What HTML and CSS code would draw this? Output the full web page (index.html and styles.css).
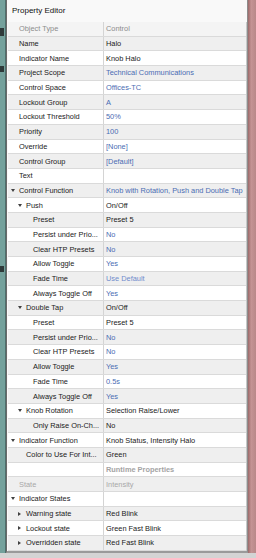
FILE: index.html
```html
<!DOCTYPE html>
<html lang="en">
<head>
    <meta charset="UTF-8">
    <title>Property Editor</title>
    <link rel="stylesheet" href="styles.css">
</head>
<body>
<div class="screen">
    <div class="backdrop-left">
        <div class="blot b1"></div>
        <div class="blot b2"></div>
        <div class="blot b3"></div>
    </div>
    <div class="dialog">
        <div class="dialog-title">Property Editor</div>
        <div class="grid">
            <div class="row head"><div class="key">Object Type</div><div class="val">Control</div></div>
            <div class="row alt"><div class="key">Name</div><div class="val">Halo</div></div>
            <div class="row"><div class="key">Indicator Name</div><div class="val">Knob Halo</div></div>
            <div class="row alt"><div class="key">Project Scope</div><div class="val set">Technical Communications</div></div>
            <div class="row"><div class="key">Control Space</div><div class="val set">Offices-TC</div></div>
            <div class="row alt"><div class="key">Lockout Group</div><div class="val set">A</div></div>
            <div class="row"><div class="key">Lockout Threshold</div><div class="val set">50%</div></div>
            <div class="row alt"><div class="key">Priority</div><div class="val set">100</div></div>
            <div class="row"><div class="key">Override</div><div class="val set">[None]</div></div>
            <div class="row alt"><div class="key">Control Group</div><div class="val set">[Default]</div></div>
            <div class="row"><div class="key">Text</div><div class="val"></div></div>
            <div class="row alt"><div class="key"><span class="caret open"></span>Control Function</div><div class="val set">Knob with Rotation, Push and Double Tap</div></div>
            <div class="row"><div class="key lvl1"><span class="caret open"></span>Push</div><div class="val">On/Off</div></div>
            <div class="row alt"><div class="key lvl2">Preset</div><div class="val">Preset 5</div></div>
            <div class="row"><div class="key lvl2">Persist under Prio...</div><div class="val set">No</div></div>
            <div class="row alt"><div class="key lvl2">Clear HTP Presets</div><div class="val set">No</div></div>
            <div class="row"><div class="key lvl2">Allow Toggle</div><div class="val set">Yes</div></div>
            <div class="row alt"><div class="key lvl2">Fade Time</div><div class="val set light">Use Default</div></div>
            <div class="row"><div class="key lvl2">Always Toggle Off</div><div class="val set">Yes</div></div>
            <div class="row alt"><div class="key lvl1"><span class="caret open"></span>Double Tap</div><div class="val">On/Off</div></div>
            <div class="row"><div class="key lvl2">Preset</div><div class="val">Preset 5</div></div>
            <div class="row alt"><div class="key lvl2">Persist under Prio...</div><div class="val set">No</div></div>
            <div class="row"><div class="key lvl2">Clear HTP Presets</div><div class="val set">No</div></div>
            <div class="row alt"><div class="key lvl2">Allow Toggle</div><div class="val set">Yes</div></div>
            <div class="row"><div class="key lvl2">Fade Time</div><div class="val set">0.5s</div></div>
            <div class="row alt"><div class="key lvl2">Always Toggle Off</div><div class="val set">Yes</div></div>
            <div class="row"><div class="key lvl1"><span class="caret open"></span>Knob Rotation</div><div class="val">Selection Raise/Lower</div></div>
            <div class="row alt"><div class="key lvl2">Only Raise On-Ch...</div><div class="val">No</div></div>
            <div class="row"><div class="key"><span class="caret open"></span>Indicator Function</div><div class="val">Knob Status, Intensity Halo</div></div>
            <div class="row alt"><div class="key lvl1">Color to Use For Int...</div><div class="val">Green</div></div>
            <div class="row"><div class="key"></div><div class="val section">Runtime Properties</div></div>
            <div class="row alt"><div class="key dim">State</div><div class="val dim">Intensity</div></div>
            <div class="row"><div class="key"><span class="caret open"></span>Indicator States</div><div class="val"></div></div>
            <div class="row alt"><div class="key lvl1"><span class="caret closed"></span>Warning state</div><div class="val">Red Blink</div></div>
            <div class="row"><div class="key lvl1"><span class="caret closed"></span>Lockout state</div><div class="val">Green Fast Blink</div></div>
            <div class="row alt"><div class="key lvl1"><span class="caret closed"></span>Overridden state</div><div class="val">Red Fast Blink</div></div>
        </div>
    </div>
    <div class="backdrop-right"></div>
</div>
</body>
</html>
```

FILE: styles.css
```css
body {
    margin: 0;
    font-family: "Liberation Sans", Arial, sans-serif;
    font-size: 7.4px;
    color: #1a1a1a;
    background: #d4d4d4;
}

.screen {
    display: flex;
    height: 553px;
}

.backdrop-left {
    width: 6px;
    background: #74a19c;
    position: relative;
    border-right: 1px solid #4e6f6c;
    box-sizing: border-box;
}

.blot {
    position: absolute;
    left: 0;
    width: 4px;
    background: #2f3a3a;
}

.b1 { top: 28px; height: 8px; }
.b2 { top: 66px; height: 6px; }
.b3 { top: 266px; height: 6px; }

.backdrop-right {
    width: 8px;
    background: linear-gradient(to right, #9c6a6a, #c49494 40%, #b88888);
}

.dialog {
    flex: 1;
    display: flex;
    flex-direction: column;
    background: #f9f9f9;
    border-left: 1px solid #6a6a6a;
    border-right: 1px solid #8c8c8c;
    border-bottom: 2px solid #9a9a9a;
}

.dialog-title {
    height: 22px;
    line-height: 22px;
    padding-left: 5px;
    font-size: 8px;
    color: #111;
}

.grid {
    display: flex;
    flex-direction: column;
    margin-left: 1px;
    border-right: 1px solid #c8c8c8;
}

.row {
    display: flex;
    height: 14.7px;
    box-sizing: border-box;
    border-bottom: 1px solid #dadada;
    background: #ffffff;
}

.row.alt {
    background: #efefef;
}

.row.head {
    background: #f4f4f4;
    color: #8c8c8c;
}

.key {
    width: 96px;
    flex: none;
    box-sizing: border-box;
    padding-left: 11px;
    border-right: 1px solid #d4d4d4;
    display: flex;
    align-items: center;
    white-space: nowrap;
    overflow: hidden;
    position: relative;
}

.key.lvl1 {
    padding-left: 18px;
}

.key.lvl2 {
    padding-left: 25px;
}

.val {
    flex: 1;
    padding-left: 2px;
    display: flex;
    align-items: center;
    white-space: nowrap;
    overflow: hidden;
}

.val.set {
    color: #4a6cb3;
}

.val.set.light {
    color: #6f8ccc;
}

.dim {
    color: #a8a8a8;
}

.section {
    font-weight: bold;
    color: #a4a4a4;
}

.caret {
    position: absolute;
    width: 0;
    height: 0;
}

.caret.open {
    margin-left: -8px;
    border-left: 2.5px solid transparent;
    border-right: 2.5px solid transparent;
    border-top: 3px solid #404040;
}

.caret.closed {
    margin-left: -8px;
    border-top: 2.5px solid transparent;
    border-bottom: 2.5px solid transparent;
    border-left: 3px solid #404040;
}
```
